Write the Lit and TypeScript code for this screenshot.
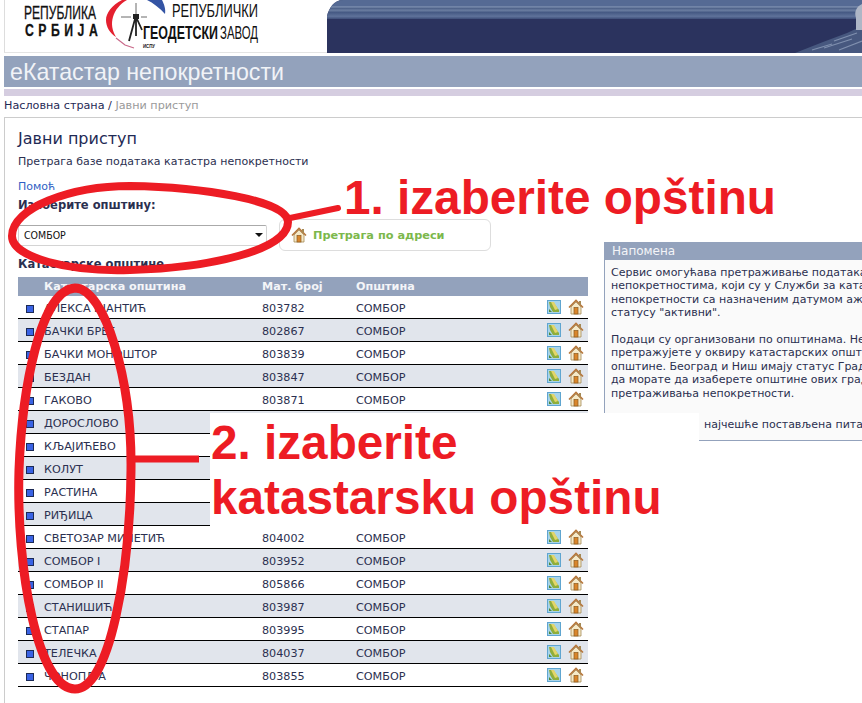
import { LitElement, html, css, svg } from "lit";
import { customElement } from "lit/decorators.js";

const ROWS: [string, string][] = [
  ["АЛЕКСА ШАНТИЋ", "803782"],
  ["БАЧКИ БРЕГ", "802867"],
  ["БАЧКИ МОНОШТОР", "803839"],
  ["БЕЗДАН", "803847"],
  ["ГАКОВО", "803871"],
  ["ДОРОСЛОВО", ""],
  ["КЉАЈИЋЕВО", ""],
  ["КОЛУТ", ""],
  ["РАСТИНА", ""],
  ["РИЂИЦА", ""],
  ["СВЕТОЗАР МИЛЕТИЋ", "804002"],
  ["СОМБОР I", "803952"],
  ["СОМБОР II", "805866"],
  ["СТАНИШИЋ", "803987"],
  ["СТАПАР", "803995"],
  ["ТЕЛЕЧКА", "804037"],
  ["ЧОНОПЉА", "803855"],
];

const mapIcon = html`<svg class="ic" width="14" height="14" viewBox="0 0 14 14">
  <rect x="0.5" y="0.5" width="13" height="13" fill="#a8d4ea" stroke="#5fa5d0"/>
  <path d="M2 2 L6 2 L12 10 L12 12 L6 12 L3 7 Z" fill="#8fae3c"/>
  <path d="M4 2 L7 2 L11 9 L8 10 Z" fill="#e3d56a"/>
  <path d="M2 9 L5 12 L2 12 Z" fill="#4f8a3a"/>
</svg>`;

const houseIcon = (cls = "ic") => html`<svg class=${cls} width="16" height="16" viewBox="0 0 16 16">
  <path d="M3 8 L3 15 L13 15 L13 8 L8 3 Z" fill="#f5e9c8" stroke="#a58a55" stroke-width="0.8"/>
  <path d="M1 8.5 L8 1.5 L15 8.5" fill="none" stroke="#b5763a" stroke-width="1.6"/>
  <rect x="11" y="2" width="2" height="3.5" fill="#a58a55"/>
  <rect x="6" y="8.5" width="4" height="6.5" fill="#d9862c" stroke="#8a5a20" stroke-width="0.7"/>
</svg>`;

const logo = svg`
  <g fill="#111" font-family="'Liberation Sans', Arial, sans-serif">
    <text x="24" y="19" font-size="18" textLength="72" lengthAdjust="spacingAndGlyphs" stroke="#111" stroke-width="0.3">РЕПУБЛИКА</text>
    <text transform="translate(25 36) scale(0.72 1)" font-size="17" font-weight="700" textLength="101" lengthAdjust="spacing" stroke="#111" stroke-width="0.3">СРБИЈА</text>
    <text x="172" y="17" font-size="19" textLength="86" lengthAdjust="spacingAndGlyphs">РЕПУБЛИЧКИ</text>
    <text x="143" y="39" font-size="19" font-weight="700" textLength="75" lengthAdjust="spacingAndGlyphs">ГЕОДЕТСКИ</text>
    <text x="220" y="39" font-size="19" textLength="38" lengthAdjust="spacingAndGlyphs">ЗАВОД</text>
    <text x="143" y="48" font-size="6" font-weight="700" textLength="12" lengthAdjust="spacingAndGlyphs">ИСПУ</text>
  </g>
  <path d="M122 0 C112 5 106 13 106 20 C106 27 110 33 116 37 C112 30 111 24 113 17 C115 10 120 4 127 0 Z" fill="#e4202f"/>
  <path d="M147 0 C153 3 160 8 165 14 C166 9 164 4 162 0 Z" fill="#3454a4"/>
  <path d="M116 38 L125 45 L134 48" fill="none" stroke="#c96a8a" stroke-width="1.2"/>
  <path d="M136 3 V14 M121 17 H131 M141 17 H147" stroke="#444" stroke-width="0.8" fill="none"/>
  <rect x="133" y="14" width="6" height="5" fill="#222"/>
  <path d="M135 19 L129 41 M136 19 L136 36 M137 19 L142 30" stroke="#222" stroke-width="1.8" fill="none"/>
`;

@customElement("app-root")
export class AppRoot extends LitElement {
  static styles = css`
    :host {
      display: block;
      position: relative;
      width: 862px;
      height: 703px;
      overflow: hidden;
      background: #fff;
      font-family: "DejaVu Sans", Verdana, sans-serif;
      font-size: 11px;
      color: #2b3050;
    }
    .top { display: flex; height: 53px; }
    .logo { width: 323px; margin-left: 4px; flex: none; border-left: 1px solid #ddd; border-bottom: 1px solid #e4e4e4; box-sizing: border-box; }
    .logo svg { display: block; margin-left: -5px; }
    .banner { flex: 1; display: block; }
    .title {
      margin: 3px 0 0 4px;
      height: 31px;
      background: #93a2bc;
      color: #f1f3f7;
      font-family: "Liberation Sans", Arial, sans-serif;
      font-size: 23.2px;
      line-height: 33px;
      padding-left: 6px;
    }
    .lav { margin: 2px 0 0 4px; height: 7px; background: #d5cde0; }
    .crumb { height: 21px; line-height: 20px; padding-left: 4px; box-sizing: border-box; color: #1f2a55; font-size: 11.2px; }
    .crumb span { color: #9a9a9a; }
    .main {
      margin-left: 4px;
      height: 606px;
      box-sizing: border-box;
      border-top: 1px solid #ccc;
      border-left: 1px solid #ccc;
      display: flex;
    }
    .left { width: 583px; flex: none; padding-left: 13px; box-sizing: border-box; }
    h1 { margin: 11px 0 0; font-size: 16px; line-height: 20px; font-weight: 400; color: #1f2a55; }
    .sub { margin-top: 6px; line-height: 14px; }
    .help { margin-top: 11px; line-height: 14px; color: #2f5fc4; }
    .lbl { margin-top: 4px; font-weight: 700; font-size: 11.5px; line-height: 14px; }
    .choose { display: flex; align-items: center; height: 32px; margin-top: 7px; }
    .sel {
      width: 249px; height: 21px; box-sizing: border-box;
      border: 1px solid #d4d4d4; border-top-color: #aaa; border-radius: 2px;
      display: flex; align-items: center; justify-content: space-between;
      padding: 0 3px 0 5px; color: #111; font-size: 10.5px;
      font-family: "DejaVu Sans Condensed", "DejaVu Sans", sans-serif;
    }
    .arrow { width: 0; height: 0; border: 4px solid transparent; border-top: 4px solid #111; border-bottom: 0; }
    .addr {
      margin-left: 12px; width: 212px; height: 32px; box-sizing: border-box;
      border: 1px solid #ddd; border-radius: 6px;
      display: flex; align-items: center; gap: 6px; padding-left: 11px;
      font-weight: 700; color: #7cb84c; font-size: 11.3px;
    }
    h2 { margin: 6px 0 0; font-size: 11.5px; line-height: 14px; font-weight: 700; color: #2b3050; }
    table { width: 570px; margin-top: 6px; border-collapse: collapse; table-layout: fixed; font-size: 11.2px; }
    th { height: 19px; padding: 0; background: #93a2bc; color: #f4f5f8; font-weight: 700; text-align: left; font-size: 11.2px; }
    td { height: 18px; padding: 4px 0 0; border-bottom: 1px solid #000; line-height: 18px; white-space: nowrap; overflow: hidden; }
    tr.alt td { background: #e1e5ec; }
    .c0 { width: 26px; }
    .c1 { width: 218px; }
    .c2 { width: 94px; }
    .c3 { width: 160px; }
    .sq { display: block; width: 8px; height: 8px; margin-left: 8px; background: #3a63e4; border: 1px solid #1c2a55; box-sizing: border-box; }
    .ic { display: block; }
    .acts { display: flex; align-items: center; justify-content: flex-end; gap: 7px; height: 22px; margin-top: -4px; padding-right: 4px; }
    .hi { flex: none; }
    .note {
      margin-top: 124px; width: 400px; height: 199px; flex: none;
      border-left: 1px solid #93a2bc; border-bottom: 1px solid #93a2bc;
      background: #fafafa; box-sizing: border-box; margin-left: 16px;
    }
    .nh { height: 18px; line-height: 19px; background: #93a2bc; color: #f4f5f8; font-size: 12px; padding-left: 7px; }
    .nb { padding: 6px 0 0 6px; line-height: 13.4px; white-space: nowrap; font-size: 11px; }
    .nb p { margin: 0 0 13.4px; }
    .nb .faq { margin-top: 18px; padding-left: 93px; }
    .patch { position: absolute; left: 210px; top: 413px; width: 489px; height: 114px; background: #fff; }
    .ink { position: absolute; left: 0; top: 0; pointer-events: none; }
    .big {
      position: absolute; color: #ed1c24; font-family: "Liberation Sans", Arial, sans-serif;
      font-weight: 700; font-size: 47.7px; line-height: 55px; white-space: nowrap;
    }
    .b1 { left: 344px; top: 170px; }
    .b2 { left: 211px; top: 415px; }
  `;

  render() {
    return html`
      <div class="top">
        <div class="logo"><svg width="322" height="52" viewBox="0 0 322 52">${logo}</svg></div>
        <svg class="banner" width="535" height="53" viewBox="0 0 535 53">
          <defs>
            <linearGradient id="g" x1="0" y1="0" x2="0" y2="1">
              <stop offset="0" stop-color="#556a94"/>
              <stop offset="0.3" stop-color="#556a94"/>
              <stop offset="0.36" stop-color="#7d8fb0"/>
              <stop offset="0.44" stop-color="#4e6289"/>
              <stop offset="0.54" stop-color="#6a7da0"/>
              <stop offset="0.66" stop-color="#465a84"/>
              <stop offset="0.86" stop-color="#5f729a"/>
              <stop offset="1" stop-color="#3d4d78"/>
            </linearGradient>
          </defs>
          <path d="M0 53 V16 C2 8 7 0 16 0 H535 V53 Z" fill="#2b335e"/>
          <path d="M0 19 V16 C2 8 7 0 16 0 H535 V19 Z" fill="url(#g)"/>
          <path d="M468 53 L496 42 L520 33 L535 26 V53 Z" fill="#47587f"/>
          <path d="M485 50 L505 44 M497 48 L525 39 M512 50 L535 41 M507 41 L530 33" stroke="#7f8fae" stroke-width="1.2" fill="none"/>
          <path d="M529 30 V18 C527 12 529 7 535 4 V30 Z" fill="#aeb6c6"/>
        </svg>
      </div>
      <div class="title">еКатастар непокретности</div>
      <div class="lav"></div>
      <div class="crumb">Насловна страна / <span>Јавни приступ</span></div>
      <div class="main">
        <div class="left">
          <h1>Јавни приступ</h1>
          <div class="sub">Претрага базе података катастра непокретности</div>
          <div class="help">Помоћ</div>
          <div class="lbl">Изаберите општину:</div>
          <div class="choose">
            <div class="sel">СОМБОР<i class="arrow"></i></div>
            <div class="addr">${houseIcon("hi")}Претрага по адреси</div>
          </div>
          <h2>Катастарске општине</h2>
          <table>
            <thead>
              <tr>
                <th class="c0"></th><th class="c1">Катастарска општина</th><th class="c2">Мат. број</th><th class="c3">Општина</th><th></th>
              </tr>
            </thead>
            <tbody>
              ${ROWS.map(([n, id], i) => html`
                <tr class=${i % 2 ? "alt" : ""}>
                  <td><i class="sq"></i></td><td>${n}</td><td>${id}</td><td>${id ? "СОМБОР" : ""}</td>
                  <td><div class="acts">${id ? html`${mapIcon}${houseIcon()}` : ""}</div></td>
                </tr>`)}
            </tbody>
          </table>
        </div>
        <div class="note">
          <div class="nh">Напомена</div>
          <div class="nb">
            <p>Сервис омогућава претраживање података о<br>непокретностима, који су у Служби за катастар<br>непокретности са назначеним датумом ажурирања у<br>статусу "активни".</p>
            <p>Подаци су организовани по општинама. Непокретности<br>претражујете у оквиру катастарских општина<br>општине. Београд и Ниш имају статус Града, што значи<br>да морате да изаберете општине ових градова ради<br>претраживања непокретности.</p>
            <div class="faq">најчешће постављена питања</div>
          </div>
        </div>
      </div>
      <div class="patch"></div>
      <svg class="ink" width="862" height="703" viewBox="0 0 862 703" fill="none" stroke="#ed1c24" stroke-linecap="round">
        <path stroke-width="8" d="M130 186 C70 186 12 208 12 236 C12 258 70 272 130 270 C210 268 288 250 288 222 C288 200 200 187 130 186 Z"/>
        <path stroke-width="6" d="M290 218 L338 208"/>
        <path stroke-width="9" d="M75 288 C40 290 22 390 19 470 C16 570 38 689 75 689 C110 689 130 570 131 470 C132 380 105 288 75 288 Z"/>
        <path stroke-width="7" stroke-linecap="butt" d="M135 459 H199"/>
      </svg>
      <div class="big b1">1. izaberite opštinu</div>
      <div class="big b2">2. izaberite<br>katastarsku opštinu</div>
    `;
  }
}
